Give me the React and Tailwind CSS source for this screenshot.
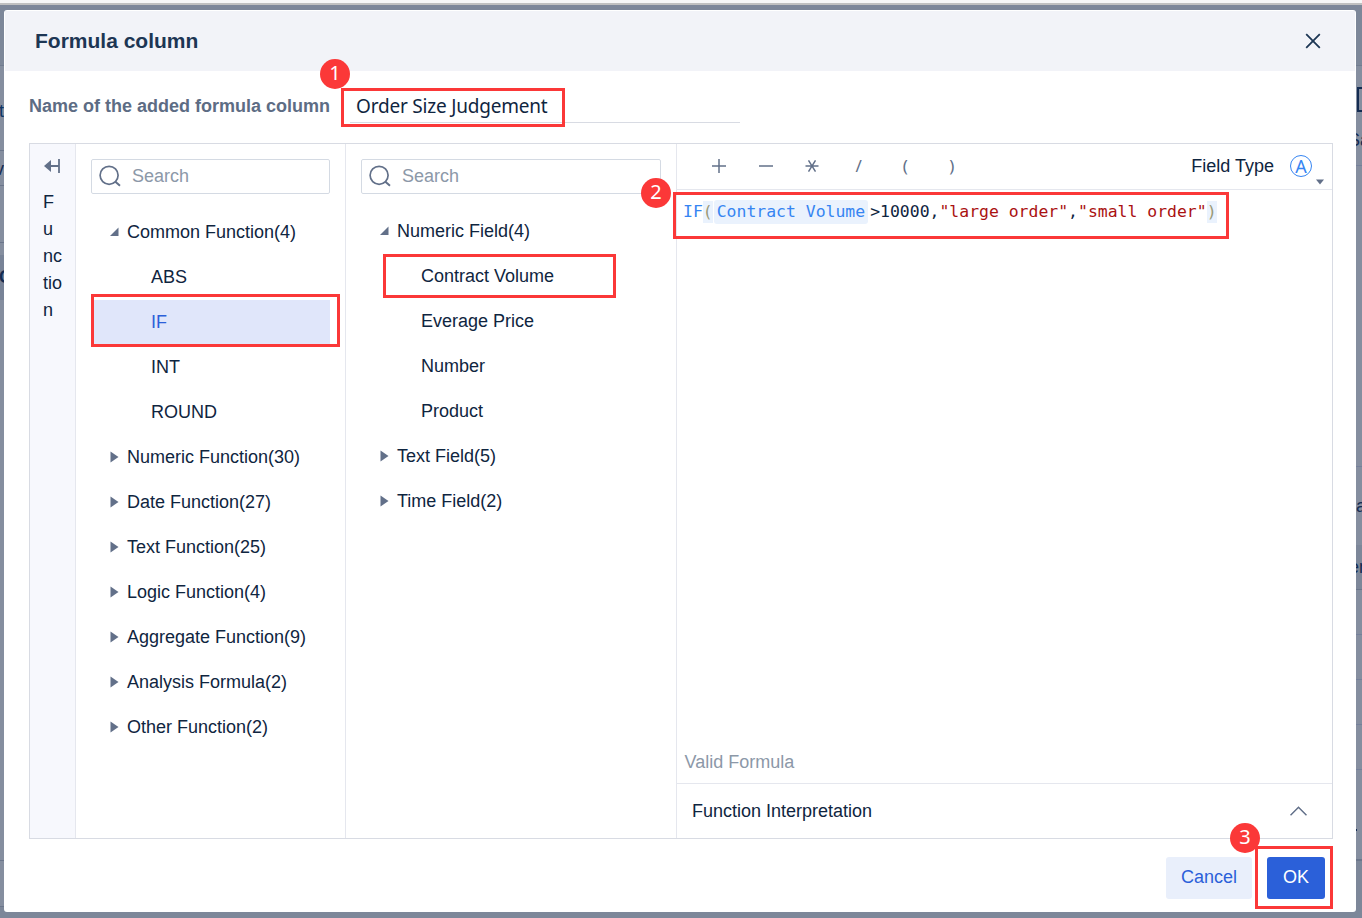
import React, { useState } from "react";
import clsx from "clsx";

const FUNCTION_GROUPS = [
    { label: "Common Function(4)", items: ["ABS", "IF", "INT", "ROUND"] },
    { label: "Numeric Function(30)" },
    { label: "Date Function(27)" },
    { label: "Text Function(25)" },
    { label: "Logic Function(4)" },
    { label: "Aggregate Function(9)" },
    { label: "Analysis Formula(2)" },
    { label: "Other Function(2)" },
];

const FIELD_GROUPS = [
    { label: "Numeric Field(4)", items: ["Contract Volume", "Everage Price", "Number", "Product"] },
    { label: "Text Field(5)" },
    { label: "Time Field(2)" },
];

// plus, minus and times are icons, the rest are plain characters
const OPERATORS = [
    { key: "plus", path: "M0 7h14M7 0v14" },
    { key: "minus", path: "M0 7h14" },
    { key: "times", path: "M0.5 7h13M3.5 1.4l7 11.2M10.5 1.4l-7 11.2" },
    { key: "divide", text: "/" },
    { key: "open", text: "(" },
    { key: "close", text: ")" },
];

function SearchBox() {
    return (
        <div className="flex h-[35px] shrink-0 items-center rounded-[2px] border border-[#d4dae3] pb-px pl-[7px]">
            <svg width="22" height="22" viewBox="0 0 22 22" fill="none" stroke="#627089" strokeWidth="1.7">
                <circle cx="10.1" cy="10.3" r="9" />
                <path d="M16.4 16.8l4.6 4" strokeWidth="2" />
            </svg>
            <span className="ml-[11px] pb-px text-[18px] leading-[22px] text-[#8c98a8]">Search</span>
        </div>
    );
}

function Caret({ open }) {
    return (
        <svg width="9" height="12" viewBox="0 0 9 12" fill="#627089" className="shrink-0">
            {open ? <path d="M8.5 1.5v8.5H0z" /> : <path d="M0.5 0.5l8 5.5-8 5.5z" />}
        </svg>
    );
}

function Tree({ groups, selected, onSelect }) {
    return (
        <ul>
            {groups.map((group) => (
                <li key={group.label}>
                    <div className="flex h-[45px] items-center gap-2 pb-[2px] pl-[19px]">
                        <Caret open={Boolean(group.items)} />
                        <span>{group.label}</span>
                    </div>
                    {group.items?.map((item) => (
                        <div
                            key={item}
                            onClick={() => onSelect?.(item)}
                            className={clsx(
                                "flex h-[45px] items-center pb-[2px] pl-[60px]",
                                selected === item && "bg-[#e0e6fa] text-[#2b60d9]"
                            )}
                        >
                            {item}
                        </div>
                    ))}
                </li>
            ))}
        </ul>
    );
}

function Frame({ className }) {
    return <div className={clsx("pointer-events-none absolute border-3 border-[#fb3838]", className)} />;
}

function Step({ n, className }) {
    return (
        <div
            className={clsx(
                "absolute flex size-[30px] items-center justify-center rounded-full bg-[#fb3838] pb-[2px] font-['Noto_Sans',sans-serif] text-[20px] leading-none text-white",
                className
            )}
        >
            {n}
        </div>
    );
}

// Slivers of the dimmed table that stay visible on both sides of the dialog
function Backdrop() {
    return (
        <div className="absolute inset-x-0 top-[5px] bottom-0 flex justify-between overflow-hidden bg-[#7d8799] text-[18px] text-[#142c52]">
            <div className="flex w-1 flex-col overflow-hidden leading-[22px]">
                <div className="h-[61px] shrink-0 border-b border-[#717c90]" />
                <div className="h-[85px] shrink-0 border-b border-[#6b768b] bg-[#858e9f] pt-[34px]">
                    <span className="-ml-px text-[#0e3463]">t</span>
                </div>
                <div className="h-[35px] shrink-0 border-b border-[#6b768b] bg-[#858e9f] pt-[7px]">
                    <span className="-ml-[5px]">v</span>
                </div>
                <div className="h-[57px] shrink-0 border-b border-[#6b768b] bg-[#858e9f]" />
                <div className="h-[12px] shrink-0 bg-[#858e9f]" />
                <div className="h-[45px] shrink-0 bg-[#788397] pt-[11px] font-bold">
                    <span className="-ml-px">C</span>
                </div>
                <div className="h-[561px] shrink-0 border-b border-[#6b768b] bg-[#858e9f]" />
                <div className="h-[46px] shrink-0 border-b border-[#6b768b] bg-[#858e9f]" />
            </div>
            <div className="flex w-[6px] flex-col overflow-hidden leading-[22px]">
                <div className="h-[61px] shrink-0 border-b border-[#717c90]" />
                <div className="h-[100px] shrink-0 border-b border-[#75809a] bg-[#858e9f] pt-[21px]">
                    <div className="ml-px h-[25px] w-5 border-2 border-[#142c52]" />
                    <div className="-ml-[8px] mt-[17px]">Sa</div>
                </div>
                <div className="h-[301px] shrink-0 border-b border-[#75809a] bg-[#858e9f]" />
                <div className="h-[78px] shrink-0 bg-[#858e9f] pt-[28px]">a</div>
                <div className="h-[45px] shrink-0 border-b border-[#6b768b] bg-[#7d8799] pt-[11px]">
                    <span className="-ml-[7px]">er</span>
                </div>
                <div className="h-[45px] shrink-0 border-b border-[#75809a] bg-[#858e9f]" />
                <div className="h-[45px] shrink-0 border-b border-[#75809a] bg-[#858e9f]" />
                <div className="h-[45px] shrink-0 border-b border-[#75809a] bg-[#858e9f]" />
                <div className="h-[45px] shrink-0 border-b border-[#75809a] bg-[#858e9f]" />
                <div className="h-[91px] shrink-0 border-b-2 border-[#6b768b] bg-[#858e9f] pt-[59px]">
                    <div className="h-[2px] w-px bg-[#142c52]" />
                </div>
            </div>
        </div>
    );
}

export default function App() {
    const [selected, setSelected] = useState("IF");

    return (
        <div className="relative h-[918px] w-[1362px] overflow-hidden bg-[#c0c0c0] font-['Liberation_Sans',Arial,sans-serif] text-[18px] leading-[22px] text-[#0f2540]">
            <div className="h-[3px] bg-[#f7f7f7]" />
            <Backdrop />

            <div className="relative mx-1 mt-[7px] flex h-[902px] w-[1352px] flex-col overflow-hidden rounded-[3px] bg-white">
                <header className="m-px mb-0 flex h-[60px] shrink-0 items-center justify-between bg-[#f2f3f8] pr-[34px] pl-[30px]">
                    <h1 className="text-[21px] font-bold text-[#1d3654]">Formula column</h1>
                    <svg width="16" height="16" viewBox="0 0 16 16" stroke="#1d3654" strokeWidth="1.8" fill="none">
                        <path d="M1.2 1.2l13.6 13.6M14.8 1.2L1.2 14.8" />
                    </svg>
                </header>

                <div className="flex h-[72px] shrink-0 pl-[25px]">
                    <label className="w-[321px] pt-[24px] font-bold text-[#5d6c84]">Name of the added formula column</label>
                    <div className="h-[52px] w-[390px] border-b border-[#d8dbe3] pt-[24px] pl-[6px] font-['Noto_Sans',sans-serif] text-[19px] tracking-[-0.2px]">
                        Order Size Judgement
                    </div>
                </div>

                <main className="mx-[25px] flex h-[696px] w-[1304px] shrink-0 border border-[#d8dbe3]">
                    <aside className="w-[46px] shrink-0 border-r border-[#e5e7ee] bg-[#f7f8fd] pt-[14px] pl-[13px]">
                        <svg width="18" height="16" viewBox="0 0 18 16" fill="none" stroke="#627089" strokeWidth="1.8">
                            <path d="M7 8h9M16 1v14" />
                            <path d="M1 8l7-6v12z" fill="#627089" stroke="none" />
                        </svg>
                        <div className="mt-[15px] w-[20px] leading-[27px] break-all">Function</div>
                    </aside>

                    <section className="w-[270px] shrink-0 border-r border-[#e5e7ee] p-[15px]">
                        <SearchBox />
                        <div className="mt-4">
                            <Tree groups={FUNCTION_GROUPS} selected={selected} onSelect={setSelected} />
                        </div>
                    </section>

                    <section className="w-[331px] shrink-0 border-r border-[#e5e7ee] p-[15px]">
                        <SearchBox />
                        <div className="mt-[15px]">
                            <Tree groups={FIELD_GROUPS} />
                        </div>
                    </section>

                    <section className="flex min-w-0 flex-1 flex-col">
                        <div className="flex h-[46px] shrink-0 items-center border-b border-[#e5e7ee] pl-[19px]">
                            {OPERATORS.map((op) => (
                                <button
                                    key={op.key}
                                    type="button"
                                    className="flex h-[22px] w-[46.5px] items-center justify-center pb-[2px] font-['Noto_Sans',sans-serif] text-[17px] leading-[22px] text-[#627089]"
                                >
                                    {op.text ?? (
                                        <svg width="14" height="14" viewBox="0 0 14 14" fill="none" stroke="#627089" strokeWidth="1.5">
                                            <path d={op.path} />
                                        </svg>
                                    )}
                                </button>
                            ))}
                            <span className="ml-auto pb-[2px]">Field Type</span>
                            <div className="mb-px ml-4 flex size-[22px] items-center justify-center rounded-full border-[1.5px] border-[#3685f2] font-['Noto_Sans',sans-serif] text-[18px] leading-none text-[#3685f2]">
                                A
                            </div>
                            <svg width="8" height="6" viewBox="0 0 8 6" fill="#627089" className="mt-[31px] mr-2 ml-1">
                                <path d="M0 0.5h8L4 5.5z" />
                            </svg>
                        </div>

                        <div className="flex flex-1 flex-col justify-between pt-[9px] pb-[10px] pl-[6px]">
                            <code className="flex h-6 items-center pt-px font-['DejaVu_Sans_Mono',monospace] text-[16.45px] leading-[22px] whitespace-pre text-[#0f2540]">
                                <span className="text-[#3685f2]">IF</span>
                                <span className="bg-[#eaf2fd] text-[#999977]">(</span>
                                <span className="mx-px rounded-[3px] bg-[#eaf2fd] px-[3px] py-px text-[#3685f2]">Contract Volume</span>
                                <span className="ml-px">{">10000,"}</span>
                                <span className="text-[#aa1111]">"large order"</span>,
                                <span className="text-[#aa1111]">"small order"</span>
                                <span className="bg-[#eaf2fd] text-[#999977]">)</span>
                            </code>
                            <p className="pl-[1.5px] text-[#8c98a8]">Valid Formula</p>
                        </div>

                        <div className="flex h-[55px] shrink-0 items-center justify-between border-t border-[#e5e7ee] pr-[25px] pl-[15px]">
                            <span>Function Interpretation</span>
                            <svg width="17" height="10" viewBox="0 0 17 10" fill="none" stroke="#627089" strokeWidth="1.5">
                                <path d="M0.5 9.2l8-8 8 8" />
                            </svg>
                        </div>
                    </section>
                </main>

                <footer className="mt-[18px] flex justify-end gap-[15px] pr-[31px]">
                    <button type="button" className="h-[42px] w-[86px] rounded-[3px] bg-[#e9effb] pb-[2px] text-[#2b60d9]">
                        Cancel
                    </button>
                    <button type="button" className="h-[42px] w-[58px] rounded-[3px] bg-[#2b60d9] pb-[2px] text-white">
                        OK
                    </button>
                </footer>
            </div>

            <Frame className="top-[88px] left-[341px] h-[39px] w-[224px]" />
            <Frame className="top-[192px] left-[673px] h-[47px] w-[556px]" />
            <Frame className="top-[294px] left-[91px] h-[53px] w-[249px]" />
            <Frame className="top-[254px] left-[383px] h-[44px] w-[233px]" />
            <Frame className="top-[846px] left-[1255px] h-[63px] w-[78px]" />
            <Step n={1} className="top-[59px] left-[320px]" />
            <Step n={2} className="top-[178px] left-[641px]" />
            <Step n={3} className="top-[823px] left-[1230px]" />
        </div>
    );
}
